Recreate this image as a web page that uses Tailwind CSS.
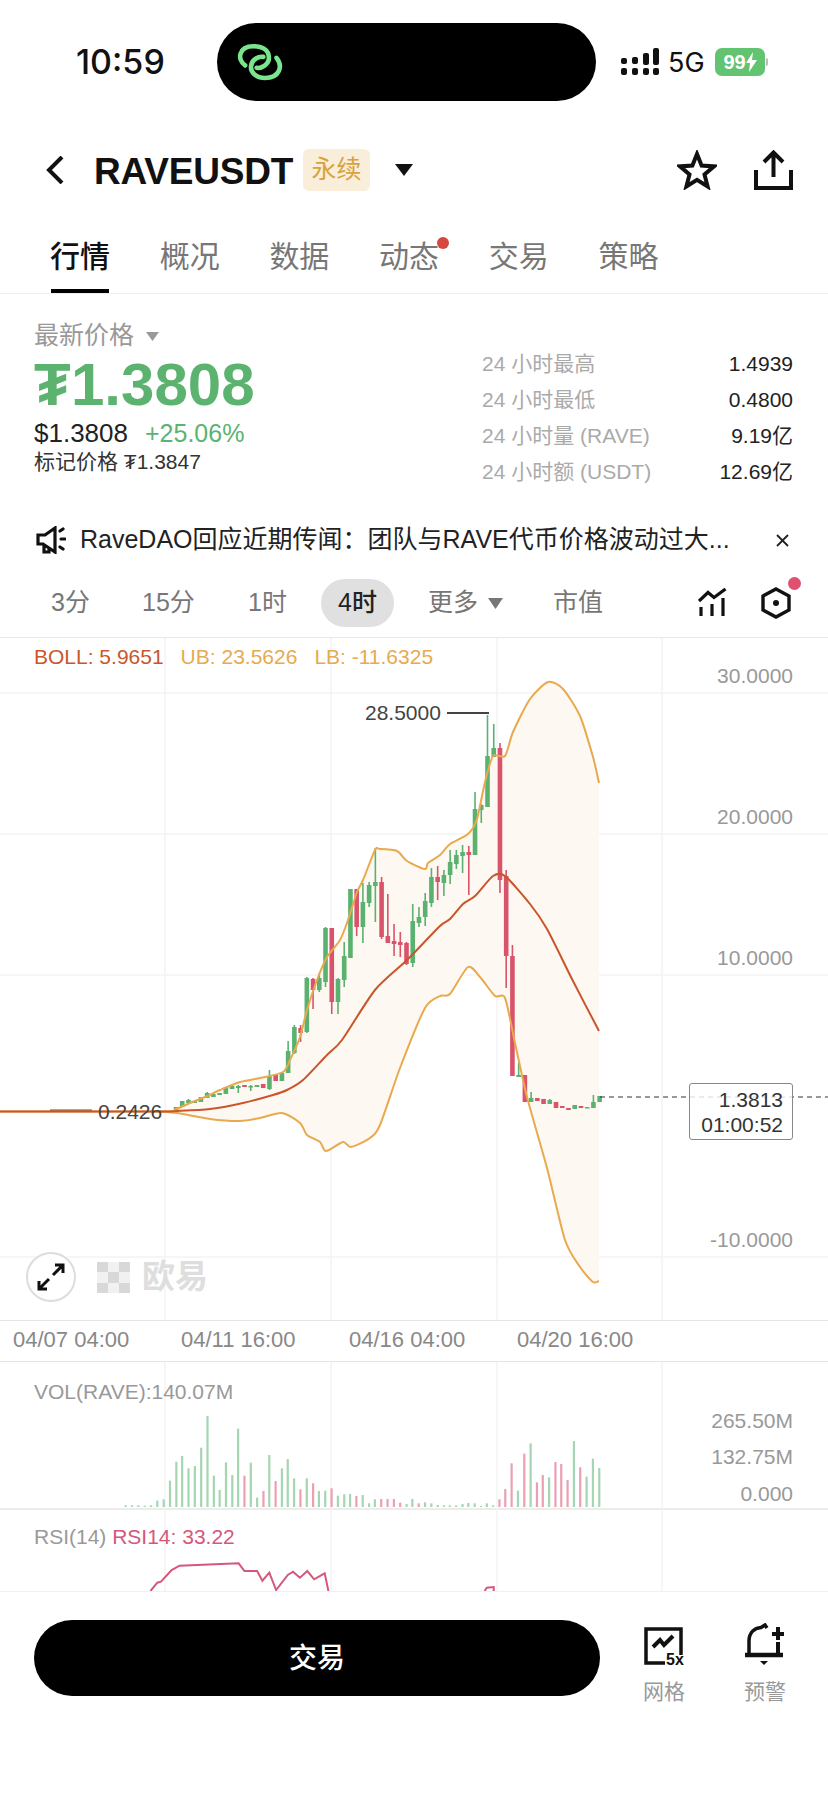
<!DOCTYPE html>
<html lang="zh">
<head>
<meta charset="utf-8">
<script src="https://cdn.jsdelivr.net/npm/@tailwindcss/browser@4"></script>
</head>
<body class="bg-white">
<div class="w-[828px] h-[1796px] overflow-hidden bg-white text-[#222] font-['Liberation_Sans','Noto_Sans_CJK_SC',sans-serif]">

  <!-- status bar -->
  <div class="h-[124px] flex items-center pl-[76px]">
    <div class="w-[141px] text-[34px] font-medium font-['Inter',sans-serif] text-[#111] leading-none">10:59</div>
    <div class="w-[379px] h-[78px] rounded-[39px] bg-black flex items-center pl-[18px]">
      <svg width="50" height="38" viewBox="70 40 150 115" fill="none" stroke="#7ae58c" stroke-width="14" stroke-linecap="round">
        <path d="M100 108C75 90 80 50 125 50C150 50 172 60 172 85C172 105 150 118 135 115"/>
        <path d="M195 85C215 110 205 146 160 146C135 146 115 130 118 110C120 90 140 80 155 82"/>
      </svg>
    </div>
    <svg class="ml-[24px]" width="40" height="28" viewBox="0 0 40 28" fill="#111">
      <rect x="1" y="10" width="6" height="6" rx="2"/><rect x="1" y="20" width="6" height="7" rx="2"/>
      <rect x="12" y="9" width="6" height="7" rx="2"/><rect x="12" y="20" width="6" height="7" rx="2"/>
      <rect x="23" y="5" width="6" height="12" rx="2"/><rect x="23" y="20" width="6" height="7" rx="2"/>
      <rect x="33" y="0" width="6" height="17" rx="2"/><rect x="33" y="20" width="6" height="7" rx="2"/>
    </svg>
    <div class="ml-[8px] w-[47px] text-[27px] font-['Inter',sans-serif] text-[#111] leading-none">5G</div>
    <div class="w-[50px] h-[28px] rounded-[7px] bg-[#62c370] flex items-center justify-center text-white text-[20px] font-bold leading-none">99<svg width="11" height="20" viewBox="0 0 11 20" fill="#fff"><path d="M7 0 0 11h4l-1 9 8-12H6z"/></svg></div>
    <div class="w-[2px] h-[8px] bg-[#bbb] rounded-r-sm ml-px"></div>
  </div>

  <!-- header -->
  <div class="h-[92px] flex items-center relative">
    <svg class="ml-[46px]" width="18" height="28" viewBox="0 0 18 28" fill="none" stroke="#111" stroke-width="4"><path d="M16 1 3 14l13 13"/></svg>
    <div class="ml-[30px] w-[199px] pt-[2px] text-[37px] font-bold leading-none tracking-[-0.2px] text-[#111] whitespace-nowrap">RAVEUSDT</div>
    <div class="ml-[10px] w-[67px] h-[42px] rounded-[6px] bg-[#f8eeda] text-[#d9a23e] text-[25px] flex items-center justify-center">永续</div>
    <svg class="ml-[25px]" width="18" height="12" viewBox="0 0 18 12" fill="#111"><path d="M0 0h18L9 12z"/></svg>
    <svg class="ml-[264px]" width="40" height="40" viewBox="0 0 40 40" fill="none" stroke="#111" stroke-width="4" stroke-linejoin="miter"><path d="M20 4 24.6 15.5 37 16.4 27.5 24.4 30.6 36.5 20 29.9 9.4 36.5 12.5 24.4 3 16.4 15.4 15.5z"/></svg>
    <svg class="ml-[37px]" width="39" height="40" viewBox="0 0 39 40" fill="none" stroke="#111" stroke-width="4"><path d="M19.5 27V3M10 12l9.500-9.500L29 12M2 20v18h35V20"/></svg>
  </div>

  <!-- tabs -->
  <div class="h-[78px] border-b border-[#efefef] flex pl-[51px] gap-[51.7px] text-[30px] text-[#777] whitespace-nowrap">
    <div class="w-[58px] pt-[4px] relative flex items-center justify-center font-medium text-[#111]">行情<div class="absolute left-0 right-0 bottom-0 h-[4px] bg-black"></div></div>
    <div class="w-[58px] pt-[4px] flex items-center justify-center">概况</div>
    <div class="w-[58px] pt-[4px] flex items-center justify-center">数据</div>
    <div class="w-[58px] pt-[4px] relative flex items-center justify-center">动态<div class="absolute right-[-11px] top-[21px] w-[12px] h-[12px] rounded-full bg-[#d6483f]"></div></div>
    <div class="w-[58px] pt-[4px] flex items-center justify-center">交易</div>
    <div class="w-[58px] pt-[4px] flex items-center justify-center">策略</div>
  </div>

  <!-- price block -->
  <div class="h-[216px] flex justify-between pl-[34px] pr-[35px]">
    <div class="pt-[25px]">
      <div class="h-[34px] flex items-center text-[25px] text-[#999]">最新价格<svg class="ml-[12px]" width="13" height="9" viewBox="0 0 13 9" fill="#999"><path d="M0 0h13L6.500 9z"/></svg></div>
      <div class="mt-[2px] h-[60px] leading-[60px] text-[60px] font-bold text-[#5bb36f] flex"><span class="w-[37px]">₮</span><span>1.3808</span></div>
      <div class="mt-[3px] h-[30px] leading-[30px] text-[26px] text-[#222] flex">$1.3808<span class="ml-[17px] text-[25px] text-[#5bb36f]">+25.06%</span></div>
      <div class="mt-px h-[26px] leading-[26px] text-[21px] text-[#333]">标记价格 ₮1.3847</div>
    </div>
    <div class="w-[311px] pt-[52px] text-[21px]">
      <div class="h-[36px] flex items-center justify-between"><span class="text-[#aaa]">24 小时最高</span><span class="text-[#222]">1.4939</span></div>
      <div class="h-[36px] flex items-center justify-between"><span class="text-[#aaa]">24 小时最低</span><span class="text-[#222]">0.4800</span></div>
      <div class="h-[36px] flex items-center justify-between"><span class="text-[#aaa]">24 小时量 (RAVE)</span><span class="text-[#222]">9.19亿</span></div>
      <div class="h-[36px] flex items-center justify-between"><span class="text-[#aaa]">24 小时额 (USDT)</span><span class="text-[#222]">12.69亿</span></div>
    </div>
  </div>

  <!-- announcement -->
  <div class="h-[60px] flex items-center pl-[36px] text-[25px] text-[#222]">
    <svg width="30" height="28" viewBox="0 0 30 28" fill="none" stroke="#111" stroke-width="3.200"><path d="M19 2 9 9H2v9h5l12 8zM8 18v8h5v-5"/><path d="M24 5l3-2M25 13h4M24 21l3 2" stroke-linecap="round"/></svg>
    <div class="ml-[14px] w-[652px] whitespace-nowrap overflow-hidden">RaveDAO回应近期传闻：团队与RAVE代币价格波动过大...</div>
    <svg class="ml-[44px]" width="13" height="13" viewBox="0 0 13 13" stroke="#222" stroke-width="1.800"><path d="M1 1l11 11M12 1 1 12"/></svg>
  </div>

  <!-- interval tabs -->
  <div class="h-[68px] border-b border-[#e8e8e8] relative flex items-center pb-px text-[25px] text-[#777] whitespace-nowrap">
    <div class="ml-[51px] w-[38px] shrink-0">3分</div>
    <div class="ml-[53px] w-[53px] shrink-0">15分</div>
    <div class="ml-[53px] w-[37px] shrink-0">1时</div>
    <div class="ml-[36px] w-[73px] h-[48px] shrink-0 rounded-[24px] bg-[#e0e0e0] flex items-center justify-center font-medium text-[#222]">4时</div>
    <div class="ml-[34px] w-[50px] shrink-0">更多</div>
    <svg class="ml-[10px] shrink-0" width="15" height="11" viewBox="0 0 15 11" fill="#777"><path d="M0 0h15L7.500 11z"/></svg>
    <div class="ml-[50px] w-[50px] shrink-0">市值</div>
    <svg class="ml-[95px] shrink-0" width="30" height="30" viewBox="0 0 30 30" fill="none" stroke="#111" stroke-width="3.200"><path d="M1 13 10 4.500l6 5L27.500 1"/><path d="M3 19v9M14 16v12M25 10v18"/></svg>
    <svg class="ml-[33px] shrink-0" width="30" height="32" viewBox="0 0 30 32" fill="none" stroke="#111" stroke-width="3.400"><path d="M15 2 28 9v14l-13 7-13-7V9z"/><circle cx="15" cy="16" r="3" fill="#111" stroke="none"/></svg>
    <div class="absolute left-[788px] top-[7px] w-[13px] h-[13px] rounded-full bg-[#e1506f]"></div>
  </div>

  <!-- main chart -->
  <div class="h-[682px] relative">
    <svg id="main" class="absolute inset-0" width="828" height="682" viewBox="0 638 828 682"></svg>
    <div class="absolute left-[34px] top-[6px] h-[26px] flex items-center gap-[17px] text-[21px] whitespace-nowrap">
      <span class="text-[#c9572a]">BOLL: 5.9651</span><span class="text-[#e7aa50]">UB: 23.5626</span><span class="text-[#e7aa50]">LB: -11.6325</span>
    </div>
    <div class="absolute right-[35px] top-[25px] leading-[26px] text-[21px] text-[#999]">30.0000</div>
    <div class="absolute right-[35px] top-[166px] leading-[26px] text-[21px] text-[#999]">20.0000</div>
    <div class="absolute right-[35px] top-[307px] leading-[26px] text-[21px] text-[#999]">10.0000</div>
    <div class="absolute right-[35px] top-[589px] leading-[26px] text-[21px] text-[#999]">-10.0000</div>
    <div class="absolute left-[365px] top-[62px] leading-[26px] text-[21px] text-[#444]">28.5000</div>
    <div class="absolute left-[98px] top-[461px] leading-[26px] text-[21px] text-[#444]">0.2426</div>
    <div class="absolute left-[689px] top-[445px] w-[104px] h-[57px] border border-[#888] rounded-[3px] bg-white/80 flex flex-col justify-center items-end pr-[9px] text-[21px] leading-[25px] text-[#333]">
      <div>1.3813</div><div>01:00:52</div>
    </div>
    <div class="absolute left-[26px] top-[614px] w-[50px] h-[50px] rounded-full border-2 border-[#ddd] bg-white flex items-center justify-center">
      <svg width="28" height="28" viewBox="0 0 28 28" fill="none" stroke="#111" stroke-width="3"><path d="M16 12 26 2M18 2h8v8M12 16 2 26M2 18v8h8"/></svg>
    </div>
    <svg class="absolute left-[97px] top-[624px]" width="33" height="31" viewBox="0 0 33 31" fill="#d8d8d8">
      <rect x="0" y="0" width="11" height="10"/><rect x="22" y="0" width="11" height="10"/><rect x="11" y="10" width="11" height="11"/><rect x="0" y="21" width="11" height="10"/><rect x="22" y="21" width="11" height="10"/>
      <rect x="11" y="0" width="11" height="10" fill="#f1f1f1"/><rect x="0" y="10" width="11" height="11" fill="#f1f1f1"/><rect x="22" y="10" width="11" height="11" fill="#f1f1f1"/><rect x="11" y="21" width="11" height="10" fill="#f1f1f1"/>
    </svg>
    <div class="absolute left-[142px] top-[619px] leading-[40px] text-[33px] font-bold text-[#dedede]">欧易</div>
  </div>

  <!-- time axis -->
  <div class="h-[42px] border-y border-[#e4e4e4] flex items-center pl-[13px] pb-[4px] gap-[53px] text-[22px] text-[#888] whitespace-nowrap">
    <div class="w-[115px]">04/07 04:00</div>
    <div class="w-[115px]">04/11 16:00</div>
    <div class="w-[115px]">04/16 04:00</div>
    <div class="w-[115px]">04/20 16:00</div>
  </div>

  <!-- volume -->
  <div class="h-[148px] relative border-b-2 border-[#ececec]">
    <svg id="vol" class="absolute left-0 top-0" width="828" height="148" viewBox="0 1362 828 148"></svg>
    <div class="absolute left-[34px] top-[17px] leading-[26px] text-[21px] text-[#999]">VOL(RAVE):140.07M</div>
    <div class="absolute right-[35px] top-[46px] leading-[26px] text-[21px] text-[#999]">265.50M</div>
    <div class="absolute right-[35px] top-[82px] leading-[26px] text-[21px] text-[#999]">132.75M</div>
    <div class="absolute right-[35px] top-[119px] leading-[26px] text-[21px] text-[#999]">0.000</div>
  </div>

  <!-- RSI -->
  <div class="h-[81px] relative overflow-hidden">
    <svg id="rsi" class="absolute left-0 top-0" width="828" height="81" viewBox="0 1510 828 81"></svg>
    <div class="absolute left-[34px] top-[14px] leading-[26px] text-[21px] text-[#999] whitespace-nowrap">RSI(14) <span class="text-[#d4587c]">RSI14: 33.22</span></div>
  </div>

  <!-- footer -->
  <div class="h-[205px] border-t border-[#f1f1f1] flex items-start pl-[34px] pt-[28px]">
    <div class="w-[566px] h-[76px] rounded-[38px] bg-black text-white text-[28px] font-medium flex items-center justify-center pt-[2px]">交易</div>
    <div class="ml-[43px] w-[42px] flex flex-col items-center text-[21px] text-[#999]">
      <div class="relative w-[42px] h-[38px] mt-[7px]">
        <svg class="absolute left-0 top-0" width="42" height="38" viewBox="0 0 42 38" fill="none" stroke="#111" stroke-width="3.500"><path d="M22 36H3V2h35v26"/><path d="M10 20l7-7 4 5 9-9" stroke-width="4"/></svg>
        <div class="absolute left-[23px] top-[25px] text-[16px] leading-[16px] font-bold text-[#111]">5x</div>
      </div>
      <div class="mt-[14px] leading-[26px] whitespace-nowrap">网格</div>
    </div>
    <div class="ml-[59px] w-[42px] flex flex-col items-center text-[21px] text-[#999]">
      <svg class="mt-[3px]" width="42" height="44" viewBox="0 0 42 44" fill="none" stroke="#111" stroke-width="3.500"><path d="M5 31V18C5 10 10 5 17 4.500L21 2l2 3"/><path d="M1 32h38" stroke-width="4.500"/><path d="M34 19v11M34 4v13M28 11h12" stroke-width="4"/><path d="M16 38h8l-4 4z" fill="#111" stroke="none"/></svg>
      <div class="mt-[12px] leading-[26px] whitespace-nowrap">预警</div>
    </div>
  </div>
</div>

<script>
const G='#5bb270',R='#d9546b';
// [index, wickTop, wickBottom, bodyTop, bodyBottom, up]
const c=[[0,1107,1110,1107,1110,1],[1,1101,1107,1101,1107,1],[2,1099,1103,1100,1103,1],[3,1101,1103,1101,1103,1],[4,1097,1102,1097,1102,1],[5,1092,1098,1093,1098,1],[6,1094,1097,1094,1097,1],[7,1093,1095,1093,1095,1],[8,1087,1094,1087,1094,1],[9,1086,1089,1086,1089,1],[10,1085,1093,1086,1088,1],[11,1085,1087,1085,1087,0],[12,1085,1091,1086,1087,1],[13,1085,1087,1085,1087,1],[14,1084,1088,1084,1088,0],[15,1070,1090,1076,1089,1],[16,1075,1081,1075,1081,0],[17,1073,1081,1073,1081,1],[18,1041,1073,1051,1073,1],[19,1025,1054,1027,1053,1],[20,1025,1042,1028,1033,0],[21,977,1033,978,1032,1],[22,978,1009,979,990,0],[23,973,992,978,990,1],[24,927,987,928,982,1],[25,928,1014,928,1002,0],[26,978,1014,979,1002,1],[27,942,987,956,980,1],[28,889,958,889,958,1],[29,889,936,889,927,0],[30,883,943,902,927,1],[31,882,907,885,903,1],[32,848,922,882,886,1],[33,877,939,882,937,0],[34,894,943,936,943,0],[35,924,956,941,944,0],[36,932,957,942,945,0],[37,942,965,943,964,0],[38,904,967,921,963,1],[39,907,927,917,923,1],[40,893,926,901,917,1],[41,868,907,877,903,1],[42,866,900,877,882,0],[43,870,896,875,883,1],[44,850,884,862,875,1],[45,850,869,855,864,1],[46,845,873,852,856,1],[47,846,895,852,855,0],[48,792,855,809,855,1],[49,804,823,805,810,1],[50,715,807,756,807,1],[51,724,757,748,757,1],[52,743,893,748,880,0],[53,870,988,876,956,0],[54,945,1076,956,1076,0],[55,1063,1077,1075,1077,1],[56,1075,1102,1075,1102,0],[57,1092,1102,1098,1102,1],[58,1098,1101,1098,1101,0],[59,1099,1104,1099,1104,0],[60,1099,1104,1100,1104,1],[61,1102,1108,1102,1108,0],[62,1106,1108,1106,1108,0],[63,1108,1110,1108,1110,0],[64,1105,1109,1105,1109,1],[65,1106,1108,1106,1108,0],[66,1107,1108,1107,1108,1],[67,1095,1108,1102,1108,1],[68,1096,1102,1096,1102,1]];
const UB=[[0,1111.5],[160,1111.5],[176,1109],[190,1103],[205,1097],[220,1090],[240,1082],[260,1078],[283,1072],[290,1060],[300,1037],[307,1010],[317,980],[327,957],[340,940],[348,920],[357,892],[363,880],[375,850],[380,849],[397,851],[407,861],[425,869],[428,863],[440,855],[450,844],[468,834],[477,819],[485,782],[493,756],[505,756],[513,732],[530,699],[548,682],[563,689],[580,716],[593,757],[599,783]];
const MB=[[0,1111.5],[160,1111.5],[177,1111],[210,1109],[243,1103],[273,1095],[287,1090],[303,1080],[327,1055],[342,1040],[375,990],[407,960],[440,926],[450,919],[463,904],[475,896],[493,876],[505,876],[530,904],[547,929],[573,981],[599,1031]];
const LB=[[160,1111.5],[177,1113],[210,1119],[240,1121],[260,1118],[282,1113],[300,1123],[307,1135],[320,1142],[326,1151],[343,1142],[351,1147],[370,1138],[380,1125],[400,1068],[425,1008],[440,996],[450,994],[468,967],[480,977],[495,996],[505,998],[515,1043],[527,1097],[547,1168],[565,1240],[580,1267],[593,1282],[599,1281]];
const pts=a=>a.map(p=>p.join(',')).join(' ');
const smooth=a=>{let d='';for(let i=0;i<a.length-1;i++){const p0=a[Math.max(i-1,0)],p1=a[i],p2=a[i+1],p3=a[Math.min(i+2,a.length-1)];
  const k=8;d+=`C${(p1[0]+(p2[0]-p0[0])/k).toFixed(1)} ${(p1[1]+(p2[1]-p0[1])/k).toFixed(1)} ${(p2[0]-(p3[0]-p1[0])/k).toFixed(1)} ${(p2[1]-(p3[1]-p1[1])/k).toFixed(1)} ${p2[0]} ${p2[1]}`;}return d;};
const curve=(a,col)=>`<path d="M${a[0][0]} ${a[0][1]}${smooth(a)}" fill="none" stroke="${col}" stroke-width="2" stroke-linejoin="round"/>`;
const vgrid=(y1,y2)=>[165,331,497,662].map(x=>`<line x1="${x}" x2="${x}" y1="${y1}" y2="${y2}" stroke="#f3f3f3" stroke-width="1.500"/>`).join('');
let s=vgrid(638,1320);
[693,834,975,1257].forEach(y=>s+=`<line x1="0" x2="828" y1="${y}" y2="${y}" stroke="#f3f3f3" stroke-width="1.500"/>`);
const U=UB.slice(1),L=LB.slice().reverse();
s+=`<path d="M${U[0][0]} ${U[0][1]}${smooth(U)}L${L[0][0]} ${L[0][1]}${smooth(L)}Z" fill="#fdf8f1"/>`;
s+=`<line x1="50" x2="92" y1="1110.500" y2="1110.500" stroke="#555" stroke-width="2"/>`;
c.forEach(([i,wt,wb,bt,bb,up])=>{const x=176+6.23*i,col=up?G:R;
  s+=`<rect x="${x-.8}" y="${wt}" width="1.600" height="${wb-wt}" fill="${col}"/>`;
  s+=`<rect x="${x-2.3}" y="${bt}" width="4.600" height="${Math.max(bb-bt,1.5)}" fill="${col}"/>`;});
s+=curve(LB,'#e8a94f')+curve(UB,'#e8a94f')+curve(MB,'#c9552b');
s+=`<line x1="447" x2="489" y1="713" y2="713" stroke="#444" stroke-width="2"/>`;
s+=`<line x1="600" x2="828" y1="1097" y2="1097" stroke="#333" stroke-width="1" stroke-dasharray="5 4"/>`;
document.getElementById('main').innerHTML=s;

const v=[[238,826,1],[250,826,1],[262,826,1],[274,827,1],[286,826,1],[298,812,1],[310,808,1],[322,752,1],[334,695,1],[345,678,1],[357,715,1],[369,708,1],[381,653,1],[393,558,1],[405,737,1],[416,780,1],[428,697,1],[440,735,1],[451,596,1],[463,737,0],[475,698,1],[487,803,1],[499,783,0],[510,675,1],[522,753,0],[534,715,1],[545,687,1],[557,745,1],[569,778,0],[581,745,1],[593,760,0],[604,783,1],[616,782,1],[628,775,0],[640,797,1],[652,793,1],[663,792,1],[675,798,0],[687,795,1],[699,820,1],[710,808,1],[722,807,0],[734,807,0],[746,807,0],[758,818,0],[770,822,1],[781,807,1],[793,820,0],[805,817,1],[817,820,1],[829,825,1],[841,826,1],[852,826,1],[864,826,1],[876,822,1],[887,819,1],[899,820,1],[911,828,1],[922,820,1],[934,826,1],[946,808,0],[957,777,0],[969,700,0],[981,782,1],[993,671,0],[1005,640,1],[1017,757,0],[1028,735,0],[1040,742,1],[1052,696,0],[1063,702,0],[1075,750,0],[1087,633,1],[1099,712,0],[1111,740,1],[1123,686,1],[1135,714,1]];
let t=vgrid(1362,1510);
v.forEach(([zx,top,up])=>{const x=zx/1.894,y=1230+top/3;
  t+=`<rect x="${x-1.1}" y="${y}" width="2.200" height="${1507-y}" fill="${up?'#a5d6b2':'#eba0b2'}"/>`;});
document.getElementById('vol').innerHTML=t;

const r=[[285,243],[298,218],[305,215],[325,180],[340,167],[452,160],[463,183],[487,183],[497,212],[510,188],[523,240],[545,195],[555,185],[568,203],[582,183],[595,208],[615,190],[622,243]];
const toR=a=>a.map(([x,y])=>[(x/1.894).toFixed(1),(1510+y/3).toFixed(1)]);
let u=vgrid(1510,1591);
u+=`<polyline points="${pts(toR(r))}" fill="none" stroke="#d4587c" stroke-width="2"/>`;
u+=`<polyline points="${pts(toR([[918,243],[922,233],[935,231],[935,243]]))}" fill="none" stroke="#d4587c" stroke-width="2"/>`;
document.getElementById('rsi').innerHTML=u;
</script>
</body>
</html>
